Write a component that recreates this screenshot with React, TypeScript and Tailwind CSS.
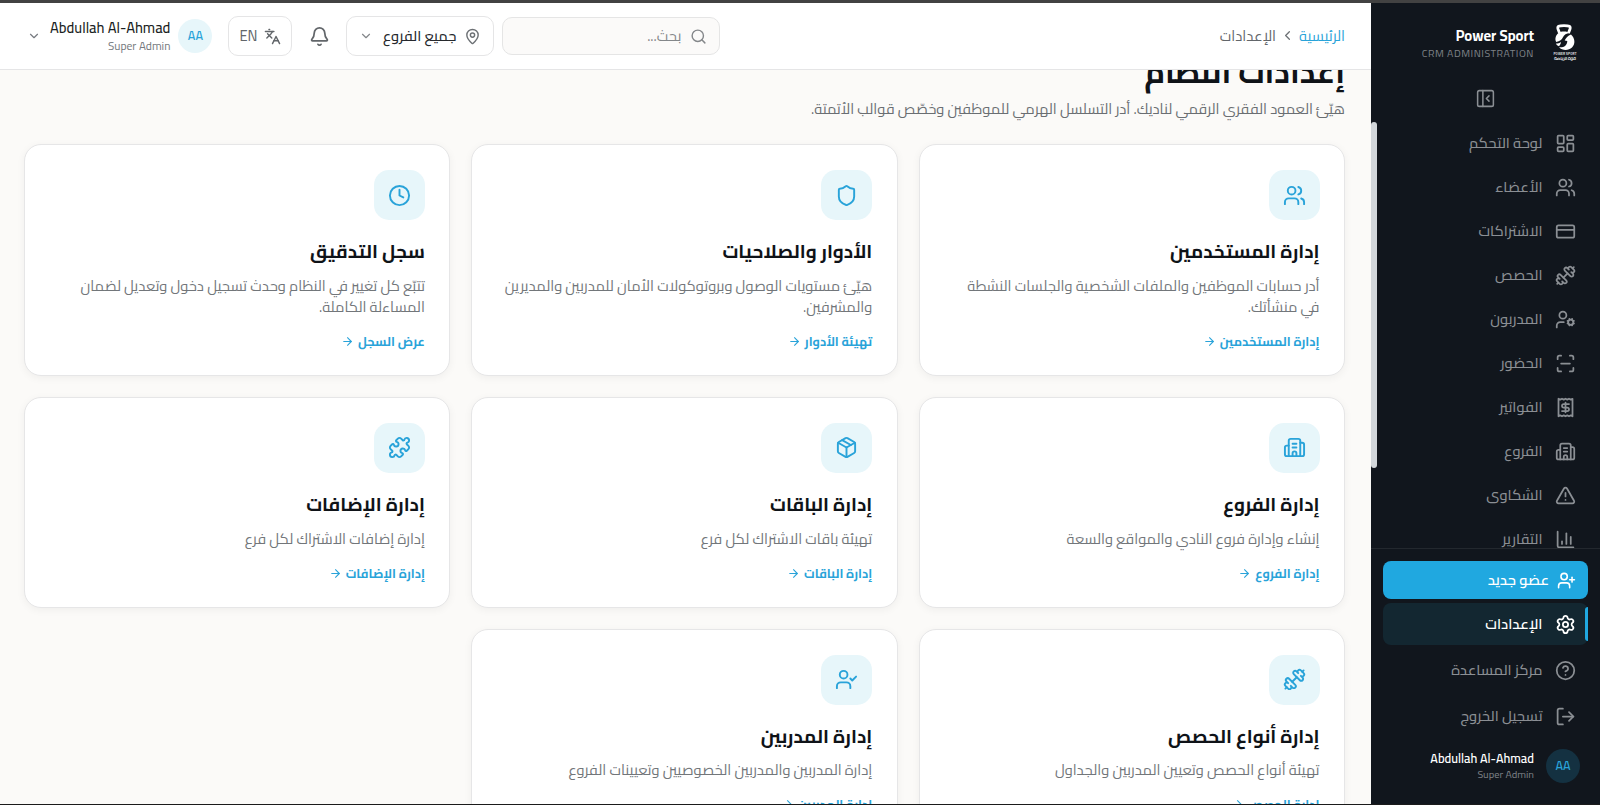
import {
  ArrowRight,
  Bell,
  Building2,
  ChartColumn,
  ChevronDown,
  ChevronLeft,
  CircleQuestionMark,
  Clock,
  CreditCard,
  Dumbbell,
  Languages,
  LayoutDashboard,
  LogOut,
  MapPin,
  Package,
  PanelLeftClose,
  Puzzle,
  Receipt,
  ScanLine,
  Search,
  Settings,
  Shield,
  TriangleAlert,
  UserCheck,
  UserCog,
  UserPlus,
  Users,
  type LucideIcon,
} from "lucide-react"

type NavItem = { label: string; icon: LucideIcon }
type Card = { title: string; text: string; link: string; icon: LucideIcon }

const navItems: NavItem[] = [
  { label: "لوحة التحكم", icon: LayoutDashboard },
  { label: "الأعضاء", icon: Users },
  { label: "الاشتراكات", icon: CreditCard },
  { label: "الحصص", icon: Dumbbell },
  { label: "المدربون", icon: UserCog },
  { label: "الحضور", icon: ScanLine },
  { label: "الفواتير", icon: Receipt },
  { label: "الفروع", icon: Building2 },
  { label: "الشكاوى", icon: TriangleAlert },
  { label: "التقارير", icon: ChartColumn },
]

const cards: Card[] = [
  {
    title: "إدارة المستخدمين",
    text: "أدر حسابات الموظفين والملفات الشخصية والجلسات النشطة في منشأتك.",
    link: "إدارة المستخدمين",
    icon: Users,
  },
  {
    title: "الأدوار والصلاحيات",
    text: "هيّئ مستويات الوصول وبروتوكولات الأمان للمدربين والمديرين والمشرفين.",
    link: "تهيئة الأدوار",
    icon: Shield,
  },
  {
    title: "سجل التدقيق",
    text: "تتبّع كل تغيير في النظام وحدث تسجيل دخول وتعديل لضمان المساءلة الكاملة.",
    link: "عرض السجل",
    icon: Clock,
  },
  { title: "إدارة الفروع", text: "إنشاء وإدارة فروع النادي والمواقع والسعة", link: "إدارة الفروع", icon: Building2 },
  { title: "إدارة الباقات", text: "تهيئة باقات الاشتراك لكل فرع", link: "إدارة الباقات", icon: Package },
  { title: "إدارة الإضافات", text: "إدارة إضافات الاشتراك لكل فرع", link: "إدارة الإضافات", icon: Puzzle },
  { title: "إدارة أنواع الحصص", text: "تهيئة أنواع الحصص وتعيين المدربين والجداول", link: "إدارة الحصص", icon: Dumbbell },
  {
    title: "إدارة المدربين",
    text: "إدارة المدربين والمدربين الخصوصيين وتعيينات الفروع",
    link: "إدارة المدربين",
    icon: UserCheck,
  },
]

function Logo() {
  return (
    <svg viewBox="0 0 24 38" className="h-[38px] w-6 shrink-0" fill="none">
      <path d="M6.500 9 5 5C4.200 2.400 5.600 1.600 11 1.600s6.800.8 6 3.400L15.500 9" stroke="#fff" strokeWidth="2.800" />
      <path d="M5.500 9C8 7 14.500 7 17 9.300c-3-.2-6 1.300-7.200 4.300-.8 2-3 4-6.600 4.400C1.400 14.500 3 11 5.500 9Z" fill="#fff" />
      <path d="M18 10.500c4 3.500 4.700 9.500 1 13-3.500 3.400-9.700 3.200-13-.2 5.300.4 8-2 8.300-6.300l-2.600-.5c1-2.500 3.300-5 6.300-6Z" fill="#fff" />
      <path d="M3 19.500c1.700 0 3.500-.5 5-1.500-.2 1.700-.8 3-2 4.200C4.500 21.800 3.400 20.800 3 19.500Z" fill="#fff" />
      <text x="12" y="31" textAnchor="middle" textLength="23" fontSize="3.400" fontWeight="700" fill="#d8dadb">
        POWER SPORT
      </text>
      <text x="12" y="35.800" textAnchor="middle" textLength="22" fontSize="4.800" fontWeight="700" fill="#d8dadb">
        قوة الرياضة
      </text>
    </svg>
  )
}

function SideLink({ label, icon: Icon, active }: NavItem & { active?: boolean }) {
  return (
    <a
      href="#"
      className={
        active
          ? "relative flex h-[42px] shrink-0 items-center gap-3 rounded-lg bg-[#132731] px-[12.500px] text-[14.650px] font-semibold text-white"
          : "relative flex h-[42px] shrink-0 items-center gap-3 rounded-lg px-[12.500px] text-[14.650px] font-medium text-[#8b8f94]"
      }
    >
      {active && <span className="absolute top-1 right-0 h-[34px] w-[3px] rounded-l-full bg-[#20a8e0]" />}
      <Icon size={21} />
      <span>{label}</span>
    </a>
  )
}

function Sidebar() {
  return (
    <aside className="relative flex w-[229px] shrink-0 flex-col bg-[#11161d]">
      <div className="flex h-[78px] items-center pt-0.5 pr-[23px]">
        <Logo />
        <div className="mr-[19px] flex flex-col items-end pt-px text-left" dir="ltr">
          <span className="text-[14.650px] leading-[18px] font-bold text-white">Power Sport</span>
          <span className="text-[10.500px] leading-4 tracking-[0.05em] text-[#7d8186]">CRM ADMINISTRATION</span>
        </div>
      </div>
      <button className="flex h-[41px] shrink-0 items-start justify-center pt-[7px] text-[#8b8f94]">
        <PanelLeftClose size={21} strokeWidth={1.75} />
      </button>
      <nav className="relative flex h-[427px] shrink-0 flex-col gap-0.5 overflow-hidden border-b border-[#23282e] px-3">
        {navItems.map((item) => (
          <SideLink key={item.label} {...item} />
        ))}
        <span className="absolute top-0 left-0 h-[346px] w-[6px] rounded-full bg-[#d3d7db]" />
      </nav>
      <div className="flex flex-col gap-1 px-3 pt-3">
        <button className="flex h-[38px] items-center gap-2 rounded-lg bg-[#20a8e0] px-[12px] text-[14.650px] font-semibold text-white">
          <UserPlus size={19} />
          <span>عضو جديد</span>
        </button>
        <SideLink label="الإعدادات" icon={Settings} active />
        <SideLink label="مركز المساعدة" icon={CircleQuestionMark} />
        <SideLink label="تسجيل الخروج" icon={LogOut} />
      </div>
      <div className="mt-[12px] flex items-center gap-3 pr-5">
        <span className="flex size-[34px] items-center justify-center rounded-full bg-[#143141] text-[12.600px] font-semibold text-[#29a3d9]">AA</span>
        <div className="flex flex-col pt-px" dir="ltr">
          <span className="text-right text-[12.600px] leading-4 font-semibold text-white">Abdullah Al-Ahmad</span>
          <span className="text-right text-[10.500px] leading-[15px] text-[#7d8186]">Super Admin</span>
        </div>
      </div>
    </aside>
  )
}

function Header() {
  return (
    <header className="relative z-10 flex h-[67px] shrink-0 items-center justify-between border-b border-[#e5e5e6] bg-white pr-[26px] pl-[27px]">
      <div className="flex items-center gap-1 text-[14.650px]">
        <a href="#" className="text-[#29a3d9]">الرئيسية</a>
        <ChevronLeft size={15} className="text-[#6d7175]" />
        <span className="text-[#62666a]">الإعدادات</span>
      </div>
      <div className="flex items-center">
        <div className="flex h-[38px] w-[218px] items-center gap-[9px] rounded-[10px] border border-[#e5e5e5] bg-[#fbfaf9] px-3 text-[14.650px] text-[#84878a]">
          <Search size={17} />
          <span>بحث...</span>
        </div>
        <button className="mr-2 flex h-10 w-[148px] items-center rounded-[10px] border border-[#e5e5e6] px-3 text-[14.650px] font-medium text-[#26292d]">
          <MapPin size={17} className="text-[#6d7175]" />
          <span className="mr-2">جميع الفروع</span>
          <ChevronDown size={14} className="mr-auto text-[#84878a]" />
        </button>
        <button className="mr-2 flex size-[38px] items-center justify-center text-[#62666a]">
          <Bell size={21} />
        </button>
        <button className="mr-2 flex h-10 w-16 items-center justify-center gap-[7px] rounded-[10px] border border-[#e5e5e6] text-[14.650px] text-[#62666a]">
          <Languages size={17} />
          <span>EN</span>
        </button>
        <div className="mr-4 flex items-center">
          <span className="flex size-[34px] items-center justify-center rounded-full bg-[#e7f6fa] text-[12.600px] font-semibold text-[#29a3d9]">AA</span>
          <div className="mr-2 flex flex-col" dir="ltr">
            <span className="text-right text-[14.700px] leading-[19px] font-medium text-[#1b1f24]">Abdullah Al-Ahmad</span>
            <span className="text-right text-[11.600px] leading-[18px] text-[#777b80]">Super Admin</span>
          </div>
          <ChevronDown size={14} className="mr-[9px] text-[#777b80]" />
        </div>
      </div>
    </header>
  )
}

function SettingsCard({ title, text, link, icon: Icon }: Card) {
  return (
    <article className="flex flex-col items-start rounded-[17px] border border-[#e6e6e7] bg-white pt-[25px] pr-[24.500px] pb-[23px] pl-[26px] shadow-[0_2px_8px_rgba(0,0,0,0.05)]">
      <span className="flex h-[50px] w-[51px] shrink-0 items-center justify-center rounded-[15px] bg-[#e7f6fa] text-[#29a3d9]">
        <Icon size={23} />
      </span>
      <h2 className="mt-[17px] text-[18.900px] leading-[28px] font-bold text-[#0f1318]">{title}</h2>
      <p className="mt-[9.800px] w-full text-[14.650px] leading-[21px] text-[#72767a]">{text}</p>
      <a href="#" className="mt-[14px] flex items-center gap-1 text-[12.600px] leading-[21px] font-bold text-[#29a3d9]">
        {link}
        <ArrowRight size={13} />
      </a>
    </article>
  )
}

export default function App() {
  return (
    <div dir="rtl" className="flex h-[805px] w-full flex-col overflow-hidden border-t-[3px] border-b border-t-[#424242] border-b-[#1b1b1b] bg-[#fbfaf8] font-[Cairo,sans-serif]">
      <div className="flex min-h-0 flex-1">
        <Sidebar />
        <div className="flex min-w-0 flex-1 flex-col">
          <Header />
          <main className="min-h-0 flex-1 overflow-hidden pr-[26px] pl-6">
            <h1 className="-mt-[21px] text-[31.400px] leading-[46px] font-bold text-[#0f1318]">إعدادات النظام</h1>
            <p className="mt-[3px] text-[14.650px] leading-[22px] text-[#6a6e72]">
              هيّئ العمود الفقري الرقمي لناديك. أدر التسلسل الهرمي للموظفين وخصّص قوالب الأتمتة.
            </p>
            <div className="mt-[24px] grid grid-cols-3 gap-x-[21px] gap-y-[21px]">
              {cards.map((card) => (
                <SettingsCard key={card.title} {...card} />
              ))}
            </div>
          </main>
        </div>
      </div>
    </div>
  )
}
